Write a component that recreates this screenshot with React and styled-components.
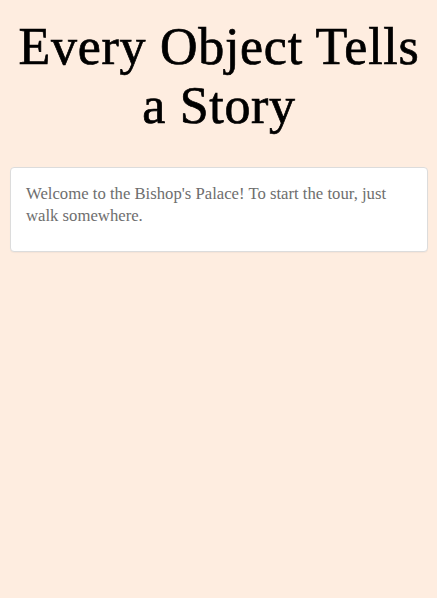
import React from "react";
import styled, { createGlobalStyle } from "styled-components";

const Global = createGlobalStyle`
  html, body { margin: 0; padding: 0; background: #feede0; }
  body { min-height: 598px; }
`;

const Page = styled.div`
  padding: 0 9px 0 10px;
  display: flex;
  flex-direction: column;
`;

const Title = styled.h1`
  margin: 17px 0 32px;
  font-family: "Liberation Serif", serif;
  font-weight: normal;
  font-size: 52px;
  line-height: 59px;
  letter-spacing: 0.7px;
  -webkit-text-stroke: 0.7px #000;
  text-align: center;
  color: #000;
`;

const Card = styled.div`
  background: #fff;
  border: 1px solid #dcdcdc;
  border-radius: 4px;
  padding: 15px 15px 24px;
  box-shadow: 0 1px 1px rgba(0,0,0,0.04);
`;

const Message = styled.p`
  margin: 0;
  font-family: "Liberation Serif", serif;
  font-size: 16.7px;
  line-height: 22px;
  color: #6e6e6e;
`;

export default function App() {
  return (
    <>
      <Global />
      <Page>
        <Title>Every Object Tells a Story</Title>
        <Card>
          <Message>
            Welcome to the Bishop's Palace! To start the tour, just walk somewhere.
          </Message>
        </Card>
      </Page>
    </>
  );
}
